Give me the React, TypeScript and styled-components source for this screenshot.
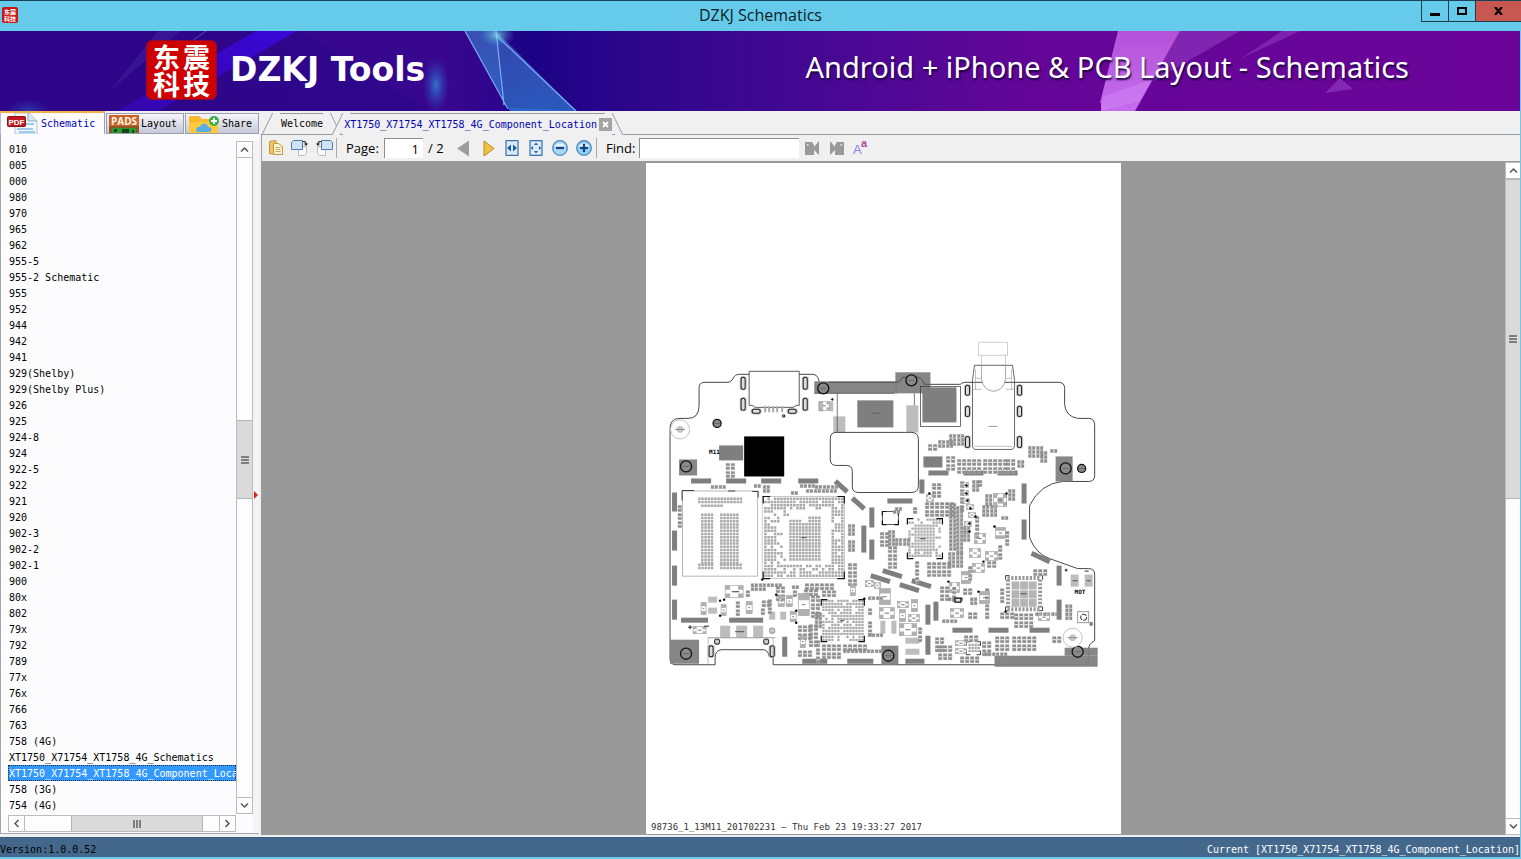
import React from "react";
import styled, { createGlobalStyle, css } from "styled-components";

const Global = createGlobalStyle`
  *, *::before, *::after { box-sizing: border-box; }
  html, body, #root { height: 100%; }
  body { margin: 0; overflow: hidden; background: #f0f0f0; }
  button, input { font: inherit; color: inherit; margin: 0; padding: 0; border: 0; border-radius: 0; background: none; }
`;

const ui = `"Open Sans", "Noto Sans", sans-serif`;
const mono = `"DejaVu Sans Mono", "Liberation Mono", monospace`;

/* ---------- window frame ---------- */
const Window = styled.div`
  display: flex;
  flex-direction: column;
  height: 100vh;
  background: #66cbea;
  border-top: 1px solid #17425a;
  font-family: ${mono};
  font-size: 10px;
  line-height: 16px;
  color: #000;
`;
const TitleBar = styled.header`
  display: grid;
  grid-template-columns: 100px 1fr 100px;
  height: 30px;
  flex: none;
`;
const AppIcon = styled.div`
  padding: 6px 0 0 2px;
`;
const Title = styled.h1`
  margin: 0;
  text-align: center;
  font: 400 16px/28px ${ui};
  color: #0c1c26;
`;
const Controls = styled.div`
  display: flex;
  height: 21px;
  border: solid #1c3c4c;
  border-width: 0 0 1px 1px;
`;
const WinButton = styled.button<{ $close?: boolean }>`
  flex: ${(p) => (p.$close ? "none" : "1")};
  width: ${(p) => (p.$close ? "45px" : "auto")};
  background: ${(p) => (p.$close ? "#c75750" : "#66cbea")};
  border-right: ${(p) => (p.$close ? "0" : "1px solid #1c3c4c")};
  display: flex;
  align-items: center;
  justify-content: center;
`;

/* ---------- banner ---------- */
const Banner = styled.div`
  position: relative;
  flex: none;
  height: 80px;
  margin-right: 1px;
  display: flex;
  align-items: center;
  justify-content: space-between;
  padding: 0 111px 0 146px;
  overflow: hidden;
  background: linear-gradient(90deg, #2d0588 0%, #30078c 30%, #1b0286 35%, #30078c 43%, #4a0894 56%, #640698 68%, #6b0599 100%);
`;
const BannerArt = styled.svg`
  position: absolute;
  inset: 0;
  width: 100%;
  height: 100%;
`;
const Brand = styled.div`
  position: relative;
  display: flex;
  align-items: center;
  gap: 13px;
  padding-bottom: 2px;
  font: 700 33px/40px "DejaVu Sans", sans-serif;
  color: #fff;
`;
const Seal = styled.div`
  display: grid;
  grid-template-columns: 30px 30px;
  justify-content: center;
  align-content: center;
  width: 71px;
  height: 60px;
  border-radius: 6px;
  background: #cf0000;
  border: 1px solid #8d0a3c;
  font: 700 27px/27px "Noto Sans CJK SC", sans-serif;
  text-align: center;
`;
const Tagline = styled.p`
  position: relative;
  margin: 0;
  padding-bottom: 8px;
  font: 400 29px/40px "Noto Sans", sans-serif;
  color: #fff;
  text-shadow: 1px 2px 2px #1a0040;
  white-space: nowrap;
`;

/* ---------- body ---------- */
const Body = styled.div`
  flex: 1;
  min-height: 0;
  display: flex;
  margin-right: 1px;
  background: #f0f0f0;
`;
const Sidebar = styled.aside`
  flex: none;
  width: 261px;
  display: flex;
  flex-direction: column;
  padding-bottom: 3px;
`;
const SideTabs = styled.div`
  display: flex;
  align-items: flex-end;
  gap: 1px;
  height: 23px;
`;
const SideTab = styled.button<{ $active?: boolean; $w: number }>`
  display: flex;
  align-items: center;
  gap: 2px;
  width: ${(p) => p.$w}px;
  height: 21px;
  padding: 1px 0 0 2px;
  overflow: hidden;
  border: 1px solid #9aa0b4;
  background: linear-gradient(#f6f6f8, #c6c8da);
  ${(p) =>
    p.$active &&
    css`
      height: 23px;
      gap: 3px;
      padding: 0 0 0 6px;
      color: #0000b4;
      background: #fcfcfe;
      border-width: 2px 1px 0 1px;
      border-top-color: #f5b04a;
      border-left-color: #b8bcc8;
    `}
`;
const SideBody = styled.div`
  flex: 1;
  min-height: 0;
  display: flex;
  width: 259px;
  background: #fcfcfe;
  border: solid #a4a8b0;
  border-width: 0 0 1px 1px;
  padding: 7px 0 1px 7px;
`;
const ListArea = styled.div`
  flex: 1;
  min-width: 0;
  display: flex;
  flex-direction: column;
`;
const List = styled.ul`
  flex: 1;
  min-height: 0;
  overflow: hidden;
  list-style: none;
  margin: 0;
  padding: 0;
`;
const Row = styled.li<{ $selected?: boolean }>`
  height: 16px;
  line-height: 18px;
  white-space: pre;
  padding-left: 1px;
  ${(p) =>
    p.$selected &&
    css`
      color: #fff;
      background: #3399ff;
      outline: 1px dotted #20304a;
      outline-offset: -1px;
    `}
`;
const SideScroll = styled.div`
  flex: none;
  display: flex;
  padding-bottom: 18px;
`;
const Splitter = styled.div`
  flex: none;
  width: 6px;
  padding: 16px 0 0 1px;
  background: #f4f4f6;
  display: flex;
  align-items: center;
`;

/* ---------- scroll bars ---------- */
const ScrollBar = styled.div<{ $row?: boolean; $slim?: boolean }>`
  flex: none;
  display: flex;
  flex-direction: ${(p) => (p.$row ? "row" : "column")};
  ${(p) => (p.$row ? "height: 17px;" : p.$slim ? "width: 15px;" : "width: 17px;")}
  background: #fdfdfd;
  border: 1px solid #bcbcbc;
  ${(p) => p.$slim && "border-right-width: 0;"}
`;
const ScrollButton = styled.button<{ $row?: boolean }>`
  flex: none;
  display: flex;
  align-items: center;
  justify-content: center;
  ${(p) => (p.$row ? "width: 16px;" : "height: 16px;")}
  border: solid #bcbcbc;
  border-width: 0;
  &:first-child { ${(p) => (p.$row ? "border-right-width: 1px;" : "border-bottom-width: 1px;")} }
  &:last-child { ${(p) => (p.$row ? "border-left-width: 1px;" : "border-top-width: 1px;")} }
`;
const Track = styled.div<{ $grow: number }>`
  flex: ${(p) => p.$grow} 1 0;
`;
const Thumb = styled.div<{ $grow: number; $row?: boolean }>`
  flex: ${(p) => p.$grow} 1 0;
  display: flex;
  align-items: center;
  justify-content: center;
  background: #dadada;
  border: solid #b4b4b4;
  border-width: ${(p) => (p.$row ? "0 1px" : "1px 0")};
`;

function Chevron({ turn }: { turn: number }) {
  return (
    <svg width="9" height="9" viewBox="0 0 9 9" fill="none" stroke="#555" strokeWidth="1.5">
      <path d="M1 6.5 4.5 3 8 6.5" transform={`rotate(${turn} 4.5 4.5)`} />
    </svg>
  );
}
function Scroller({ row, slim, before, size, after }: { row?: boolean; slim?: boolean; before: number; size: number; after: number }) {
  return (
    <ScrollBar $row={row} $slim={slim}>
      <ScrollButton $row={row} aria-label={row ? "Scroll left" : "Scroll up"}><Chevron turn={row ? -90 : 0} /></ScrollButton>
      <Track $grow={before} />
      <Thumb $grow={size} $row={row}>
        <svg width="8" height="8" viewBox="0 0 8 8" stroke="#606060" strokeWidth="1.5">
          <path d="M0 1H8M0 4H8M0 7H8" transform={row ? "rotate(90 4 4)" : undefined} />
        </svg>
      </Thumb>
      <Track $grow={after} />
      <ScrollButton $row={row} aria-label={row ? "Scroll right" : "Scroll down"}><Chevron turn={row ? 90 : 180} /></ScrollButton>
    </ScrollBar>
  );
}

/* ---------- document pane ---------- */
const Main = styled.main`
  flex: 1;
  min-width: 0;
  display: flex;
  flex-direction: column;
`;
const DocTabs = styled.div`
  display: flex;
  flex: none;
  height: 24px;
  padding-top: 2px;
  border-bottom: 1px solid #979aa0;
`;
const DocTab = styled.div<{ $active?: boolean }>`
  position: relative;
  z-index: ${(p) => (p.$active ? 2 : 1)};
  display: flex;
  align-items: center;
  gap: 2px;
  height: ${(p) => (p.$active ? "22px" : "21px")};
  margin-left: ${(p) => (p.$active ? "13px" : "12px")};
  padding: ${(p) => (p.$active ? "0 0 0 1px" : "0 7px 0 8px")};
  border-top: 1px solid #979aa0;
  background: #f0f0f0;
  color: ${(p) => (p.$active ? "#0000b4" : "#000")};
  &::before, &::after {
    content: "";
    position: absolute;
    z-index: -1;
    top: -1px;
    bottom: 0;
    width: 8px;
    background: #f0f0f0;
  }
  &::before { left: -6px; border-left: 1px solid #979aa0; transform: skewX(-26deg); }
  &::after { right: -6px; border-right: 1px solid #979aa0; transform: skewX(26deg); }
`;
const CloseTab = styled.button`
  display: flex;
  width: 13px;
  height: 13px;
  background: #a3a3a3;
`;
const Toolbar = styled.div`
  flex: none;
  display: flex;
  align-items: center;
  height: 27px;
  padding-left: 4px;
  border-left: 1px solid #a0a0a0;
  border-bottom: 1px solid #999;
  font: 400 13px/18px ${ui};
`;
const Tool = styled.button<{ $w?: number }>`
  display: flex;
  align-items: center;
  justify-content: center;
  width: ${(p) => p.$w ?? 24}px;
  height: 22px;
`;
const Sep = styled.span`
  width: 1px;
  height: 20px;
  background: #a8a8a8;
`;
const Label = styled.label`
  padding-left: 9px;
  width: 47px;
`;
const FindLabel = styled(Label)`
  width: 42px;
`;
const Field = styled.input<{ $w: number }>`
  width: ${(p) => p.$w}px;
  height: 20px;
  background: #fff;
  border: solid #8c8f94;
  border-width: 1px 0 0 1px;
  text-align: right;
  padding-right: 4px;
`;
const PageCount = styled.span`
  width: 25px;
  padding-left: 5px;
  white-space: pre;
`;
const Viewer = styled.div`
  flex: 1;
  min-height: 0;
  display: flex;
  border-bottom: 2px solid #f0f0f0;
`;
const Canvas = styled.div`
  flex: 1;
  min-width: 0;
  display: flex;
  justify-content: center;
  padding: 1px 0 1px 1px;
  overflow: hidden;
  background: #999;
`;
const Sheet = styled.div`
  flex: none;
  height: 100%;
  aspect-ratio: 475 / 670;
  background: #fff;
  svg { display: block; width: 100%; height: 100%; }
`;
const StatusBar = styled.footer`
  flex: none;
  display: flex;
  justify-content: space-between;
  height: 20px;
  margin: 0 1px 2px 0;
  padding: 4px 0 0 0;
  border-top: 1px solid #3a5c7e;
  line-height: 15px;
  background: #44688c;
`;
const Current = styled.span`
  color: #fff;
`;

/* ---------- board drawing ---------- */
type Box = [number, number, number, number];

const noise = (a: number, b: number) => {
  const v = Math.sin(a * 12.9898 + b * 78.233) * 43758.5453;
  return v - Math.floor(v);
};
function field(x: number, y: number, w: number, h: number, step: number, keep: (i: number, j: number, n: number, m: number) => boolean = () => true) {
  const n = Math.floor(w / step);
  const m = Math.floor(h / step);
  const s = step - 0.7;
  let d = "";
  for (let i = 0; i < n; i++)
    for (let j = 0; j < m; j++)
      if (keep(i, j, n, m)) d += `M${(x + i * step).toFixed(1)} ${(y + j * step).toFixed(1)}h${s}v${s}h-${s}z`;
  return d;
}
const memory = [
  field(698, 497, 46, 7, 3.2), field(701, 504, 23, 6, 3.2), field(701, 513, 13, 52, 3.2),
  field(720, 513, 21, 52, 3.2), field(698, 563, 17, 7, 3.2), field(720, 563, 23, 7, 3.2),
].join("");
const cpu =
  field(764, 497, 80, 81, 3.2, (i, j, n, m) => {
    const e = Math.min(i, j, n - 1 - i, m - 1 - j);
    return e < 1 ? noise(i, j) > 0.1 : e < 4 ? noise(i, j) > 0.25 : e < 6 && i < 8 ? noise(i, j) > 0.6 : false;
  }) + field(789, 516, 35, 47, 3.2, (i, j) => !(j < 2 && i > 3 && i < 6) && !(j < 1 && i < 6));
const pmic = field(822, 599, 42, 42, 3, (i, j) => noise(i + 3, j) > 0.2);
const radio = field(908, 518, 35, 40, 3, (i, j, n, m) => {
  const e = Math.min(i, j, n - 1 - i, m - 1 - j);
  return e < 2 ? noise(i, j + 5) > 0.4 : true;
});

const bars: Box[] = [
  [691, 478, 20, 5], [726, 478, 20, 5], [761, 478, 20, 5], [798, 478, 20, 5],
  [928, 470, 20, 5], [963, 470, 20, 5], [997, 470, 20, 5], [919, 479, 5, 14],
  [1021, 483, 5, 20], [887, 498, 25, 5], [672, 492, 5, 19], [672, 530, 5, 20],
  [672, 565, 5, 20], [672, 599, 5, 20], [869, 507, 5, 20], [861, 525, 5, 27],
  [869, 539, 5, 20], [681, 617, 27, 5], [729, 617, 34, 5], [782, 636, 5, 20],
  [802, 658, 25, 5], [847, 658, 26, 5], [1021, 519, 5, 20], [1056, 565, 5, 20],
  [1056, 599, 5, 20], [925, 604, 5, 20], [933, 601, 5, 19], [925, 635, 5, 19],
  [952, 627, 20, 5], [988, 627, 20, 5], [1029, 627, 20, 5], [905, 658, 19, 5],
  [719, 445, 24, 15], [857, 400, 36, 27], [922, 387, 34, 35], [923, 456, 19, 11],
];
const shields: Box[] = [
  [679, 459, 18, 16], [814, 381, 83, 12], [895, 372, 35, 21], [1055, 456, 17, 25],
  [670, 639, 29, 24], [881, 645, 17, 19], [994, 655, 103, 11], [1064, 647, 33, 8],
];
const tilted: [number, number, number, number][] = [
  [841, 486, 16, 42], [858, 503, 16, 42], [1040, 557, 20, 25],
  [892, 573, 20, 17], [909, 587, 20, 17], [921, 583, 20, 17], [880, 578, 20, 17],
];
const pads: Box[] = [
  [833, 416, 12, 16], [906, 405, 12, 27], [720, 625, 10, 12], [736, 625, 11, 12], [753, 625, 10, 12],
  [708, 596, 9, 6], [708, 607, 9, 6], [769, 611, 6, 8], [780, 611, 6, 8], [818, 401, 5, 10], [829, 401, 4, 10],
  [905, 637, 14, 6], [905, 648, 14, 6], [880, 620, 5, 13], [891, 620, 5, 13], [1070, 574, 8, 12], [1084, 574, 8, 12],
];
const screws: [number, number, number][] = [
  [686, 466, 5.5], [823, 388, 5.5], [911, 380, 5.5], [717, 423, 4], [1065, 468, 5.5], [1081, 468, 4],
  [686, 653, 5.5], [888, 655, 5.5], [1077, 651, 5.5],
];
const slots: Box[] = [
  [741, 377, 4, 12], [803, 377, 4, 12], [741, 398, 4, 12], [803, 398, 4, 12], [752, 409, 8, 4], [788, 409, 8, 4],
  [965, 385, 4, 10], [1017, 385, 4, 10], [965, 406, 4, 10], [1017, 406, 4, 10], [965, 436, 4, 11], [1017, 436, 4, 11],
  [709, 645, 4, 11], [770, 645, 4, 11],
];
/* groups of passives: x, y, columns, rows, upright */
const groups: [number, number, number, number, boolean][] = [
  [726, 463, 2, 2, true], [711, 485, 2, 1, false], [754, 484, 1, 1, false], [763, 485, 1, 2, false],
  [800, 484, 2, 1, false], [806, 489, 4, 1, false], [815, 485, 3, 1, false], [791, 491, 1, 1, false],
  [678, 505, 1, 3, true], [848, 524, 1, 3, false], [848, 540, 1, 3, false], [848, 563, 2, 3, true],
  [751, 583, 2, 2, false], [767, 583, 2, 1, false], [776, 586, 2, 2, true], [792, 585, 1, 1, false],
  [805, 583, 6, 1, true], [804, 589, 3, 1, true], [822, 590, 3, 1, true], [762, 600, 2, 1, true],
  [761, 608, 1, 1, true], [768, 599, 1, 2, true], [793, 590, 1, 1, true], [811, 595, 2, 3, true],
  [815, 612, 1, 4, false], [798, 625, 3, 2, true], [809, 624, 2, 3, true], [798, 650, 3, 1, true],
  [816, 640, 1, 3, true], [822, 644, 4, 2, true], [843, 644, 5, 1, true], [843, 649, 5, 1, false],
  [868, 596, 2, 1, false], [868, 608, 1, 1, true], [868, 621, 1, 2, true], [868, 633, 2, 1, false],
  [949, 434, 2, 3, false], [928, 444, 2, 1, true], [938, 440, 2, 2, false], [946, 456, 2, 2, true],
  [957, 459, 5, 2, true], [983, 459, 5, 2, true], [1006, 459, 2, 2, true], [1017, 460, 1, 2, false],
  [1028, 446, 2, 3, false], [1040, 451, 1, 3, false], [1050, 449, 1, 1, false], [932, 483, 2, 2, true],
  [972, 480, 1, 3, false], [960, 481, 1, 4, true], [978, 480, 1, 1, true], [985, 494, 1, 3, false],
  [1008, 489, 1, 3, false], [925, 502, 6, 2, true], [949, 503, 1, 12, false], [956, 506, 1, 12, false],
  [948, 552, 2, 4, false], [913, 507, 1, 1, true], [895, 507, 1, 1, false], [880, 532, 2, 2, true],
  [888, 530, 1, 4, false], [888, 546, 2, 3, true], [895, 538, 2, 2, false], [915, 561, 1, 3, true],
  [927, 562, 5, 2, true], [982, 505, 2, 3, false], [975, 516, 1, 3, true], [963, 526, 1, 4, false],
  [1005, 531, 1, 2, true], [998, 545, 1, 2, true], [987, 561, 2, 1, true], [968, 566, 1, 2, true],
  [963, 588, 2, 1, true], [970, 597, 1, 2, false], [985, 588, 1, 4, true], [1000, 588, 1, 2, true],
  [968, 612, 2, 1, true], [942, 619, 2, 1, false], [1033, 569, 3, 1, true], [1000, 612, 3, 1, true],
  [1014, 613, 4, 2, true], [1035, 612, 3, 1, false], [995, 636, 3, 2, true], [1012, 636, 5, 2, true],
  [1052, 636, 2, 1, true], [1065, 604, 1, 4, false], [935, 637, 2, 2, true], [938, 645, 3, 2, true],
  [964, 635, 3, 1, true], [960, 656, 4, 1, true], [982, 641, 2, 2, true], [984, 652, 3, 1, false],
  [952, 587, 1, 2, true], [940, 586, 2, 2, true], [948, 597, 2, 1, false], [1001, 516, 1, 1, false],
  [893, 510, 1, 1, false], [918, 627, 1, 2, true], [736, 601, 1, 2, true], [746, 590, 1, 1, true],
];
let passives = "";
let passiveFrames = "";
for (const [x, y, c, r, up] of groups)
  for (let i = 0; i < c; i++)
    for (let j = 0; j < r; j++) {
      const a = x + i * (up ? 5 : 8);
      const b = y + j * (up ? 8 : 4);
      passives += up
        ? `M${a} ${b}h3.4v2.4h-3.4zM${a} ${b + 3.6}h3.4v2.4h-3.4z`
        : `M${a} ${b}h2.6v3h-2.6zM${a + 3.8} ${b}h2.6v3h-2.6z`;
      passiveFrames += up ? `M${a} ${b}h3.4v6h-3.4z` : `M${a} ${b}h6.4v3h-6.4z`;
    }
/* small ICs outlined with corner pads */
const chips: Box[] = [
  [725, 585, 18, 12], [819, 401, 10, 9], [701, 602, 5, 12], [746, 601, 6, 12], [721, 604, 5, 11],
  [778, 595, 6, 11], [786, 595, 6, 11], [790, 611, 6, 10], [798, 593, 11, 22], [850, 584, 5, 11],
  [800, 635, 5, 12], [693, 626, 13, 7], [993, 493, 13, 13], [995, 527, 10, 11], [974, 533, 11, 10],
  [969, 548, 11, 9], [985, 551, 12, 9], [972, 563, 12, 9], [961, 571, 9, 12], [949, 582, 10, 10],
  [979, 591, 10, 12], [950, 608, 13, 9], [961, 482, 7, 5], [961, 490, 7, 5], [962, 498, 7, 5],
  [966, 504, 7, 5], [968, 512, 7, 5], [964, 521, 7, 5], [962, 529, 7, 4], [926, 494, 7, 7],
  [879, 588, 11, 16], [879, 607, 15, 11], [897, 601, 11, 6], [911, 599, 6, 12], [899, 609, 6, 12],
  [908, 614, 11, 7], [899, 623, 17, 12], [955, 640, 11, 5], [955, 648, 11, 5], [865, 580, 8, 6], [874, 582, 6, 6],
  [1038, 613, 11, 7],
];
const marks: [number, number][] = [
  [966, 485], [966, 493], [967, 500], [970, 508], [975, 516], [969, 523], [969, 531], [929, 493], [1006, 493],
  [724, 599], [720, 600], [720, 615], [776, 594], [796, 610], [796, 622], [1005, 611], [994, 526], [983, 561],
  [762, 579], [864, 598], [978, 591], [948, 581],
];

const outline =
  "M670 430V428Q670 418 680 418H688Q699 418 699 405V387Q699 382 705 382H727Q731 382 733 378Q735 374 739 374H812Q818 374 819 382Q820 386 826 383Q828 382 830 382H896Q900 382 902 377H918Q922 378 923 384H960Q961 382 965 382H1058Q1064 382 1064 388V404Q1065 416 1077 418H1088Q1094 418 1094 425V475Q1094 481 1088 481H1062Q1040 483 1029 505V537Q1035 553 1049 558L1077 568H1088Q1094 568 1094 574V640Q1088 643 1088 648V658Q1088 664 1082 664H773V657L769 656Q768 649 763 649H721Q715 650 715 657V664H676Q670 664 670 658Z";

const Silk = styled.text`
  font: 700 6px ${mono};
`;
const Stamp = styled.text`
  font: 400 9px ${mono};
  fill: #333;
`;
function Corners({ b, s = 5, w: sw = 1.2 }: { b: Box; s?: number; w?: number }) {
  const [x, y, w, h] = b;
  return (
    <path
      fill="none" stroke="#111" strokeWidth={sw}
      d={`M${x} ${y + s}v-${s}h${s}M${x + w - s} ${y}h${s}v${s}M${x + w} ${y + h - s}v${s}h-${s}M${x + s} ${y + h}h-${s}v-${s}`}
    />
  );
}
const boxes = (list: Box[], fill: string) => list.map(([x, y, w, h], i) => <rect key={i} x={x} y={y} width={w} height={h} fill={fill} />);

function Board() {
  return (
    <svg viewBox="646 163 475 670" role="img" aria-label="Component location drawing">
      <path d={outline} fill="none" stroke="#333" strokeWidth="0.9" />
      {boxes(pads, "#bdbdbd")}
      {boxes(bars, "#7f7f7f")}
      <g fillOpacity="0.95">{boxes(shields, "#7f7f7f")}</g>
      {tilted.map(([x, y, w, a], i) => (
        <rect key={i} x={x - w / 2} y={y - 2.5} width={w} height="5" fill="#7f7f7f" transform={`rotate(${a} ${x} ${y})`} />
      ))}
      <rect x="744" y="436" width="40" height="40" />
      <path d="M814 393H894M837 393V432M914 393V405M828 382H896Q900 382 902 377H918Q922 378 924 384H930" fill="none" stroke="#444" strokeWidth="0.7" />
      <path d="M836 432H911Q918 432 918 439V485Q918 492 911 492H858Q852 492 852 486V471Q852 465 846 465H836Q830 465 830 459V438Q830 432 836 432Z" fill="#fff" stroke="#333" strokeWidth="0.9" />
      <rect x="920" y="386" width="40" height="40" fill="none" stroke="#333" strokeWidth="0.7" />

      {/* charging port */}
      <path d="M749 371H799V405H796L793 407H755L752 405H749Z" fill="#fff" stroke="#333" strokeWidth="0.8" />
      <path d="M765 406v6M769 406v6M773 406v6M777 406v6M782 406v6" stroke="#aaa" strokeWidth="2" />
      <circle cx="783.5" cy="415.5" r="1.2" fill="none" stroke="#111" />

      {/* audio jack */}
      <path d="M978 342H1007V355H978ZM981 355V379Q983 390 993 391Q1003 390 1005 379V355" fill="#fff" stroke="#bbb" strokeWidth="0.7" />
      <path d="M974 365H1012L1014 380V446L1012 449H974L972 446V380Z" fill="none" stroke="#444" strokeWidth="0.8" />
      <path d="M981 365V379Q983 390 993 391Q1003 390 1005 379V365M975 369V389M1011 369V389M975 378H981M1005 378H1011M972 389H981M1005 389H1014M974 446H1012" fill="none" stroke="#999" strokeWidth="0.6" />
      <path d="M988 426H997" stroke="#999" />

      {slots.map(([x, y, w, h], i) => (
        <g key={i}>
          <rect x={x - 1.5} y={y - 1} width={w + 3} height={h + 2} rx="2.5" fill="#c2c2c2" />
          <rect x={x} y={y} width={w} height={h} rx="2" fill="#ddd" stroke="#222" strokeWidth="1" />
        </g>
      ))}

      <g fill="#a9a9a9">
        <path d={memory} />
        <path d={cpu} />
        <path d={pmic} />
        <path d={radio} />
      </g>
      <rect x="682.5" y="490.5" width="75" height="85" fill="none" stroke="#999" strokeWidth="0.7" />
      <path d="M682 500V490H694M728 490.5H735M752 491H758V497" fill="none" stroke="#333" strokeWidth="0.9" />
      <rect x="762" y="496" width="82" height="82" fill="none" stroke="#aaa" strokeWidth="0.6" />
      <Corners b={[763, 496, 81, 82]} s={7} />
      <Corners b={[821, 599, 43, 42]} s={6} />
      <Corners b={[907, 518, 35, 40]} s={6} />
      <Corners b={[1005, 575, 37, 35]} s={4} w={0.8} />
      <Corners b={[966, 641, 14, 13]} s={4} w={0.8} />
      <Corners b={[994, 494, 12, 11]} s={3} w={0.8} />
      <rect x="882" y="511" width="16" height="13" fill="none" stroke="#333" strokeWidth="0.8" />
      <Corners b={[882, 511, 16, 13]} s={4} />
      <path d={field(968, 643, 12, 11, 3)} fill="#a9a9a9" />
      <rect x="997" y="497" width="6" height="6" fill="#aaa" />
      <g fill="none" stroke="#999" strokeDasharray="2.2 1.5" strokeWidth="4">
        <path d="M1007 577.5H1040M1007 608.5H1040M1007.5 579V608M1039.5 579V608" />
      </g>
      <path d={field(1011, 581, 26, 26, 8.6)} fill="#b5b5b5" />

      <path d={passiveFrames} fill="#e4e4e4" stroke="#a8a8a8" strokeWidth="0.5" />
      <path d={passives} fill="#8d8d8d" />
      {chips.map(([x, y, w, h], i) => {
        const tall = h > w;
        return (
          <g key={i} fill="#b0b0b0">
            <rect x={x} y={y} width={w} height={h} fill="none" stroke="#999" strokeWidth="0.6" />
            {tall ? (
              <path d={`M${x} ${y}h${w}v${h * 0.3}h-${w}zM${x} ${y + h * 0.7}h${w}v${h * 0.3}h-${w}z`} />
            ) : (
              <path d={`M${x} ${y}h${w * 0.28}v${h * 0.35}h-${w * 0.28}zM${x + w * 0.72} ${y}h${w * 0.28}v${h * 0.35}h-${w * 0.28}zM${x} ${y + h * 0.65}h${w * 0.28}v${h * 0.35}h-${w * 0.28}zM${x + w * 0.72} ${y + h * 0.65}h${w * 0.28}v${h * 0.35}h-${w * 0.28}z`} />
            )}
            <path d={`M${x + w * 0.35} ${y + h / 2}h${w * 0.3}`} stroke="#777" strokeWidth="1" />
          </g>
        );
      })}
      {marks.map(([x, y], i) => (
        <circle key={i} cx={x} cy={y} r="1.2" />
      ))}
      <rect x="954.5" y="597.5" width="6" height="4" fill="#ddd" stroke="#111" strokeWidth="1.2" />

      {/* battery connector */}
      <path d="M708 664V637H773V664M708 637H776" fill="none" stroke="#999" strokeWidth="0.6" />
      <circle cx="717" cy="641" r="2.6" fill="#ccc" stroke="#333" />
      <circle cx="766" cy="641" r="2.6" fill="#ccc" stroke="#333" />
      <circle cx="772" cy="630" r="2.6" fill="#ccc" stroke="#999" />

      {screws.map(([x, y, r], i) => (
        <g key={i}>
          <circle cx={x} cy={y} r={r} fill="#8a8a8a" stroke="#111" strokeWidth="1.3" />
          <path d={`M${x - 3} ${y}h6`} stroke="#666" />
        </g>
      ))}
      {[[680, 429], [1072, 637]].map(([x, y], i) => (
        <g key={i}>
          <circle cx={x} cy={y} r="9.5" fill="#fff" stroke="#aaa" strokeWidth="0.7" />
          <circle cx={x} cy={y} r="3" fill="#ccc" stroke="#aaa" strokeWidth="0.7" />
          <path d={`M${x - 5} ${y}h10`} stroke="#888" />
        </g>
      ))}
      <rect x="1077" y="611" width="11" height="11" fill="none" stroke="#999" />
      <circle cx="1083" cy="616.5" r="3" fill="#fff" stroke="#333" strokeDasharray="5 1" />
      <path d="M1089.5 622v2.5h2v-2.5z" fill="none" stroke="#222" strokeWidth="0.8" />
      <path d="M688 626.5h4M690 624.5v4M704 625.5h5M1064 569.5h3M1065.5 568v3M1084 570.5h4M830.5 399h3M832 397.5v3" stroke="#111" strokeWidth="0.9" />
      <path d="M735 631h9M871 413h8M801 537h5M920 538h5M1020 593h6M840 620h4M733 591h6M1072 580h5M1086 580h4" stroke="#666" strokeWidth="1.2" />
      <Silk x="709" y="454">M11</Silk>
      <Silk x="1074" y="593">MOT</Silk>
      <Stamp x="651" y="829">98736_1_13M11_201702231 – Thu Feb 23 19:33:27 2017</Stamp>
    </svg>
  );
}

/* ---------- icons ---------- */
const PdfIcon = () => (
  <svg width="31" height="21" viewBox="0 0 31 21">
    <path d="M8 0H22L30 8V21H8Z" fill="#f3f8fc" stroke="#a9c4dc" />
    <path d="M21 0V8H30" fill="#d6e6f4" stroke="#8fb0cc" />
    <path d="M10 16H26M16 11H27M12 19H28" stroke="#9fcbe6" strokeWidth="2" />
    <rect x="0.5" y="3.5" width="18" height="10" rx="1" fill="#c21a1f" stroke="#8e1014" />
    <text x="9.5" y="11.5" textAnchor="middle" fontFamily="Liberation Sans, sans-serif" fontWeight="700" fontSize="8" fill="#fff">PDF</text>
  </svg>
);
const TabArt = styled.svg`
  flex: none;
`;
const PadsIcon = () => (
  <TabArt width="30" height="19" viewBox="0 0 30 19">
    <rect width="30" height="19" fill="#c8642a" />
    <path d="M0 11H30V19H0Z" fill="#8b5a22" />
    <rect x="3" y="13" width="24" height="6" fill="#2f9a32" />
    <path d="M5 14h3v3h-3zM13 14h7v4h-7zM23 15h2v3h-2z" fill="#14421a" />
    <text x="15" y="10" textAnchor="middle" fontFamily="Open Sans, sans-serif" fontWeight="700" fontSize="10" fill="#fff4e0">PADS</text>
  </TabArt>
);
const ShareIcon = () => (
  <TabArt width="32" height="19" viewBox="0 0 32 19">
    <path d="M1 2Q1 1 2 1H11L14 4H28Q30 4 30 6V19H1Z" fill="#fbb829" />
    <path d="M1 7H30V19H1Z" fill="#ffc93c" />
    <path d="M10 17Q7 16 8.5 13Q10 11 12 12Q14 7 18 9Q20 10 20 12Q24 12 23.5 15Q23 17 21 17Z" fill="#55aee8" />
    <circle cx="26" cy="6" r="5" fill="#3aae49" />
    <path d="M26 3V9M23 6H29" stroke="#fff" strokeWidth="1.8" />
  </TabArt>
);
const CopyIcon = () => (
  <svg width="16" height="16" viewBox="0 0 16 16">
    <path d="M1.5 1.5 8 .5V14.5L1.5 13.5Z" fill="#f0c566" stroke="#c5963a" />
    <path d="M5.500 3.500H10.500L14.500 6.500V14.500H5.500Z" fill="#fdf2d0" stroke="#c5963a" />
    <path d="M7.500 7.500H12.500M7.500 9.500H12.500M7.500 11.500H12.500" stroke="#c9a964" />
  </svg>
);
const RotateIcon = ({ flip }: { flip?: boolean }) => (
  <svg width="17" height="16" viewBox="0 0 17 16">
    <g transform={flip ? "matrix(-1 0 0 1 17 0)" : undefined}>
      <path d="M7.5 6.5H15.5V13.5L13.5 15.5H7.5Z" fill="#fafafa" stroke="#b6bac0" />
      <path d="M2.5 .5H11.5V9.5H.5V2.500Z" fill="#cfe2f6" stroke="#4b78ad" />
      <path d="M12 1.5H13.500Q15 2 15 4" fill="none" stroke="#222" strokeWidth="1.2" />
      <path d="M13 3.5H17L15 6Z" fill="#222" />
    </g>
  </svg>
);
const Triangle = ({ next }: { next?: boolean }) => (
  <svg width="12" height="17" viewBox="0 0 12 17">
    {next ? <path d="M1 1 11 8.5 1 16Z" fill="#f0c040" stroke="#b88a1c" /> : <path d="M12 0.5V16.5L0 8.5Z" fill="#9c9c9c" />}
  </svg>
);
const FitIcon = ({ page }: { page?: boolean }) => (
  <svg width="14" height="16" viewBox="0 0 14 16">
    <rect x="1" y="0.6" width="12" height="14.800" rx="0.5" fill="#d9eafa" stroke="#3f6fa8" strokeWidth="1.2" />
    {page ? (
      <path d="M7 2.500 9 5H5ZM7 13.500 5 11H9ZM1.800 8 4 6V10ZM12.200 8 10 10V6Z" fill="#2c5f9e" />
    ) : (
      <path d="M2 8 6 4.5V11.5ZM12 8 8 11.5V4.5Z" fill="#24589a" />
    )}
  </svg>
);
const ZoomIcon = ({ plus }: { plus?: boolean }) => (
  <svg width="16" height="16" viewBox="0 0 16 16">
    <circle cx="8" cy="8" r="7.3" fill={plus ? "#8ccdf6" : "#a9d8f6"} stroke="#4e83b4" strokeWidth="1.2" />
    <path d="M2 6.5Q8 0 14 6.5Z" fill="#e4f3fd" />
    <path d={plus ? "M4 8H12M8 4V12" : "M4 8H12"} stroke="#17427c" strokeWidth="2.2" />
  </svg>
);
const FindIcon = ({ next }: { next?: boolean }) => (
  <svg width="16" height="16" viewBox="0 0 16 16">
    <path
      transform={next ? "matrix(-1 0 0 1 16 0)" : undefined}
      d="M1 2H8L10 5V7L15 1V15L10 10V15H1ZM3 4V5.500H4.500V4Z" fill="#999" fillRule="evenodd"
    />
  </svg>
);
const AppSeal = () => (
  <svg width="16" height="16" viewBox="0 0 16 16">
    <rect width="16" height="16" rx="2" fill="#cc1414" />
    <g fontFamily="Noto Sans CJK SC, sans-serif" fontSize="6" fontWeight="700" fill="#fff">
      <text x="2" y="7">东震</text>
      <text x="2" y="14">科技</text>
    </g>
  </svg>
);

const items = [
  "010", "005", "000", "980", "970", "965", "962", "955-5", "955-2 Schematic", "955", "952", "944", "942", "941",
  "929(Shelby)", "929(Shelby Plus)", "926", "925", "924-8", "924", "922-5", "922", "921", "920", "902-3", "902-2",
  "902-1", "900", "80x", "802", "79x", "792", "789", "77x", "76x", "766", "763", "758 (4G)",
  "XT1750_X71754_XT1758_4G_Schematics", "XT1750_X71754_XT1758_4G_Component_Location", "758 (3G)", "754 (4G)",
];
const current = "XT1750_X71754_XT1758_4G_Component_Location";

export default function App() {
  return (
    <>
      <Global />
      <Window>
        <TitleBar>
          <AppIcon><AppSeal /></AppIcon>
          <Title>DZKJ Schematics</Title>
          <Controls>
            <WinButton aria-label="Minimize"><svg width="10" height="10"><path d="M0 7h10v3H0z" /></svg></WinButton>
            <WinButton aria-label="Maximize"><svg width="10" height="8"><path d="M1 1h8v6H1z" fill="none" stroke="#000" strokeWidth="2" /></svg></WinButton>
            <WinButton $close aria-label="Close"><svg width="9" height="8"><path d="M1 0 8 8M8 0 1 8" stroke="#000" strokeWidth="2.2" /></svg></WinButton>
          </Controls>
        </TitleBar>

        <Banner>
          <BannerArt viewBox="0 0 1520 80" preserveAspectRatio="none" aria-hidden="true">
            <defs>
              <linearGradient id="beam" x1="1" y1="0" x2="0" y2="1">
                <stop offset="0" stopColor="#3a08e0" stopOpacity="0.9" />
                <stop offset="0.5" stopColor="#3a06d8" stopOpacity="0.7" />
                <stop offset="1" stopColor="#3a08d0" stopOpacity="0.5" />
              </linearGradient>
              <linearGradient id="glass" x1="0" y1="0" x2="0.6" y2="1">
                <stop offset="0" stopColor="#3f6cc4" stopOpacity="0.7" />
                <stop offset="1" stopColor="#2f78d0" stopOpacity="0.85" />
              </linearGradient>
              <linearGradient id="pink" x1="0" y1="0" x2="0" y2="1">
                <stop offset="0" stopColor="#b452d8" />
                <stop offset="1" stopColor="#c56cee" />
              </linearGradient>
              <radialGradient id="glow">
                <stop offset="0" stopColor="#2f8ed8" stopOpacity="0.8" />
                <stop offset="1" stopColor="#2f4cc8" stopOpacity="0" />
              </radialGradient>
              <radialGradient id="flare">
                <stop offset="0" stopColor="#8cf4e8" />
                <stop offset="1" stopColor="#3f90d8" stopOpacity="0" />
              </radialGradient>
            </defs>
            <path d="M256 0H297L158 80H118Z" fill="url(#beam)" />
            <path d="M158 0H180L110 60Z" fill="#4a30a8" fillOpacity="0.35" />
            <path d="M206 0 170 26" stroke="#7a78d8" strokeOpacity="0.6" />
            <path d="M300 0H465L508 80H430Z" fill="#4c0898" fillOpacity="0.25" />
            <ellipse cx="436" cy="54" rx="13" ry="28" fill="url(#glow)" />
            <ellipse cx="28" cy="80" rx="24" ry="12" fill="url(#glow)" fillOpacity="0.5" />
            <path d="M465 0H496L576 80H510Z" fill="url(#glass)" />
            <path d="M496 0 502 76 576 80Z" fill="#2a2a9c" fillOpacity="0.25" />
            <path d="M465 0 508 78M496 0 504 74M497 5 576 80" fill="none" stroke="#7aa8f4" strokeWidth="1.3" />
            <ellipse cx="497" cy="4" rx="18" ry="12" fill="url(#flare)" fillOpacity="0.7" />
            <path d="M1180 0H1240L1150 52 1135 80Z" fill="#9440c4" fillOpacity="0.55" />
            <path d="M1282 0H1300L1240 28Z" fill="#9440c4" fillOpacity="0.5" />
            <path d="M1118 0H1180L1135 80H1101V72H1100Z" fill="url(#pink)" />
            <path d="M1103 66 1152 48 1140 70 1101 80Z" fill="#d084f4" fillOpacity="0.5" />
            <path d="M1340 47 1353 58 1325 62Z" fill="#9440c4" fillOpacity="0.6" />
          </BannerArt>
          <Brand>
            <Seal><span>东</span><span>震</span><span>科</span><span>技</span></Seal>
            DZKJ Tools
          </Brand>
          <Tagline>Android + iPhone &amp; PCB Layout - Schematics</Tagline>
        </Banner>

        <Body>
          <Sidebar>
            <SideTabs>
              <SideTab $active $w={105}><PdfIcon />Schematic</SideTab>
              <SideTab $w={78}><PadsIcon />Layout</SideTab>
              <SideTab $w={74}><ShareIcon />Share</SideTab>
            </SideTabs>
            <SideBody>
              <ListArea>
                <List>
                  {items.map((t) => (
                    <Row key={t} $selected={t === current}>{t}</Row>
                  ))}
                </List>
                <Scroller row before={46} size={132} after={16} />
              </ListArea>
              <SideScroll><Scroller before={264} size={78} after={300} /></SideScroll>
              <Splitter>
                <svg width="5" height="8"><path d="M0 0 4 4 0 8Z" fill="#e02020" /></svg>
              </Splitter>
            </SideBody>
          </Sidebar>

          <Main>
            <DocTabs>
              <DocTab>Welcome</DocTab>
              <DocTab $active>
                {current}
                <CloseTab aria-label="Close tab">
                  <svg width="13" height="13"><path d="M4 4 9 9M9 4 4 9" stroke="#fff" strokeWidth="1.8" /></svg>
                </CloseTab>
              </DocTab>
            </DocTabs>
            <Toolbar>
              <Tool $w={20} aria-label="Copy"><CopyIcon /></Tool>
              <Tool $w={26} aria-label="Rotate right"><RotateIcon /></Tool>
              <Tool aria-label="Rotate left"><RotateIcon flip /></Tool>
              <Sep />
              <Label htmlFor="page">Page:</Label>
              <Field id="page" $w={39} defaultValue="1" />
              <PageCount>/ 2</PageCount>
              <Tool $w={30} aria-label="Previous page"><Triangle /></Tool>
              <Tool $w={22} aria-label="Next page"><Triangle next /></Tool>
              <Tool aria-label="Fit width"><FitIcon /></Tool>
              <Tool aria-label="Fit page"><FitIcon page /></Tool>
              <Tool aria-label="Zoom out"><ZoomIcon /></Tool>
              <Tool aria-label="Zoom in"><ZoomIcon plus /></Tool>
              <Sep />
              <FindLabel htmlFor="find">Find:</FindLabel>
              <Field id="find" $w={160} />
              <Tool $w={26} aria-label="Find previous"><FindIcon /></Tool>
              <Tool aria-label="Find next"><FindIcon next /></Tool>
              <Tool $w={22} aria-label="Match case">
                <svg width="16" height="20" viewBox="0 0 16 20" fontFamily="Liberation Sans, sans-serif">
                  <text x="1" y="16" fontSize="13" fill="#8a80e8">A</text>
                  <text x="9" y="9" fontSize="11" fontWeight="700" fill="#b8409c">a</text>
                </svg>
              </Tool>
            </Toolbar>
            <Viewer>
              <Canvas><Sheet><Board /></Sheet></Canvas>
              <Scroller slim before={0} size={320} after={321} />
            </Viewer>
          </Main>
        </Body>

        <StatusBar>
          <span>Version:1.0.0.52</span>
          <Current>Current [{current}]</Current>
        </StatusBar>
      </Window>
    </>
  );
}
